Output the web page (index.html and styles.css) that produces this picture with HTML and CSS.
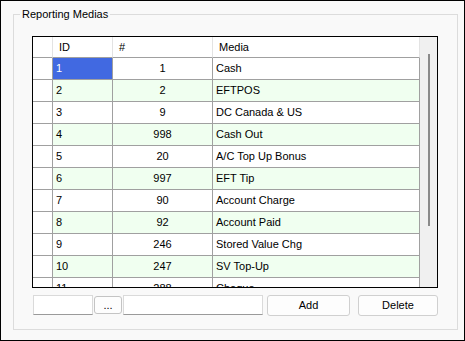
FILE: index.html
```html
<!DOCTYPE html>
<html>
<head>
<meta charset="utf-8">
<link rel="stylesheet" href="styles.css">
</head>
<body>
<div class="window">
  <fieldset class="group">
    <legend class="group-title">Reporting Medias</legend>
    <div class="group-body">
      <div class="grid">
        <div class="grid-rows">
          <div class="row head">
            <div class="cell rh"></div>
            <div class="cell">ID</div>
            <div class="cell">#</div>
            <div class="cell">Media</div>
          </div>
          <div class="row"><div class="cell rh"></div><div class="cell id selected">1</div><div class="cell num">1</div><div class="cell media">Cash</div></div>
          <div class="row alt"><div class="cell rh"></div><div class="cell id">2</div><div class="cell num">2</div><div class="cell media">EFTPOS</div></div>
          <div class="row"><div class="cell rh"></div><div class="cell id">3</div><div class="cell num">9</div><div class="cell media">DC Canada &amp; US</div></div>
          <div class="row alt"><div class="cell rh"></div><div class="cell id">4</div><div class="cell num">998</div><div class="cell media">Cash Out</div></div>
          <div class="row"><div class="cell rh"></div><div class="cell id">5</div><div class="cell num">20</div><div class="cell media">A/C Top Up Bonus</div></div>
          <div class="row alt"><div class="cell rh"></div><div class="cell id">6</div><div class="cell num">997</div><div class="cell media">EFT Tip</div></div>
          <div class="row"><div class="cell rh"></div><div class="cell id">7</div><div class="cell num">90</div><div class="cell media">Account Charge</div></div>
          <div class="row alt"><div class="cell rh"></div><div class="cell id">8</div><div class="cell num">92</div><div class="cell media">Account Paid</div></div>
          <div class="row"><div class="cell rh"></div><div class="cell id">9</div><div class="cell num">246</div><div class="cell media">Stored Value Chg</div></div>
          <div class="row alt"><div class="cell rh"></div><div class="cell id">10</div><div class="cell num">247</div><div class="cell media">SV Top-Up</div></div>
          <div class="row"><div class="cell rh"></div><div class="cell id">11</div><div class="cell num">288</div><div class="cell media">Cheque</div></div>
        </div>
        <div class="scrollbar"><div class="thumb"></div></div>
      </div>
      <div class="controls">
        <div class="textbox tb-short"></div>
        <div class="btn btn-dots">...</div>
        <div class="textbox tb-long"></div>
        <div class="btn btn-add">Add</div>
        <div class="btn btn-delete">Delete</div>
      </div>
    </div>
  </fieldset>
</div>
</body>
</html>
```

FILE: styles.css
```css
html, body {
  margin: 0;
  padding: 0;
}
body {
  font-family: "Liberation Sans", Arial, sans-serif;
  font-size: 11px;
  color: #000;
}
.window {
  box-sizing: border-box;
  width: 465px;
  height: 341px;
  border: 1px solid #000;
  background: #f9f9f9;
  padding: 0 7px 0 12px;
  overflow: hidden;
}
.group {
  box-sizing: border-box;
  width: 445px;
  margin: 7px 0 0 0;
  padding: 0;
  border: 1px solid #dcdcdc;
  min-width: 0;
}
.group-title {
  margin-left: 6px;
  padding: 0 2px;
  line-height: 13px;
}
.group-body {
  padding: 15px 19px 13px 18px;
}
.grid {
  display: flex;
  box-sizing: border-box;
  width: 406px;
  height: 252px;
  border: 1px solid #000;
  background: #fff;
}
.grid-rows {
  flex: 1;
  overflow: hidden;
}
.row {
  display: grid;
  grid-template-columns: 20px 60px 100px 207px;
  height: 22px;
}
.row.head {
  height: 21px;
}
.row.alt .cell {
  background: #f0fff0;
}
.row .cell.rh {
  background: #fff;
}
.cell {
  box-sizing: border-box;
  border-right: 1px solid #a0a0a0;
  border-bottom: 1px solid #a0a0a0;
  line-height: 21px;
  white-space: nowrap;
  overflow: hidden;
  padding-left: 3px;
}
.head .cell {
  background: #fff;
  border-right-color: #e3e3e3;
  line-height: 20px;
  padding-left: 6px;
}
.cell.rh {
  padding: 0;
}
.cell.num {
  text-align: center;
  padding-left: 0;
}
.cell.selected {
  background: #4169e1;
  color: #fff;
}
.scrollbar {
  box-sizing: border-box;
  width: 17px;
  background: #f0f0f0;
  padding: 17px 0 0 8px;
}
.thumb {
  width: 2px;
  height: 172px;
  background: #8a8a8a;
}
.controls {
  display: flex;
  align-items: flex-start;
  margin: 7px 0 0 1px;
}
.textbox {
  box-sizing: border-box;
  height: 20px;
  background: #fff;
  border: 1px solid #dadada;
  border-bottom-color: #9a9a9a;
}
.tb-short {
  width: 60px;
}
.tb-long {
  width: 140px;
  margin-left: 1px;
}
.btn {
  box-sizing: border-box;
  height: 21px;
  border: 1px solid #d0d0d0;
  border-radius: 3px;
  background: #fdfdfd;
  text-align: center;
  line-height: 19px;
}
.btn-dots {
  width: 28px;
  height: 18px;
  line-height: 16px;
  margin: 1px 0 0 1px;
  border-color: #c4c4c4;
}
.btn-add {
  width: 83px;
  margin-left: 4px;
}
.btn-delete {
  width: 80px;
  margin-left: 8px;
}
```
